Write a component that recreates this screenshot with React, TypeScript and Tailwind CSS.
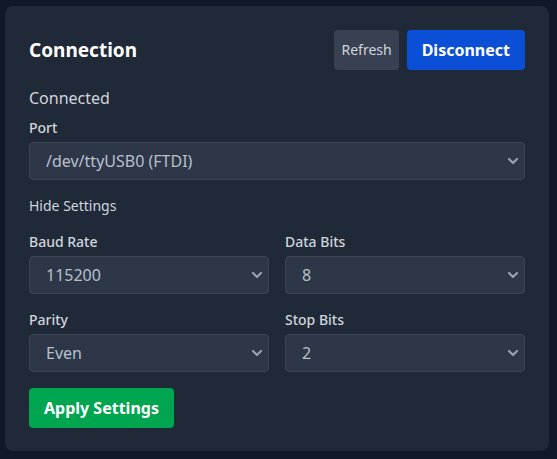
import { useState } from 'react'

function Chevron() {
  return (
    <svg className="pointer-events-none absolute right-[6px] top-1/2 -translate-y-1/2 w-[12px] h-[8px] text-gray-400" viewBox="0 0 12 8" fill="none">
      <path d="M2 2l4 4 4-4" stroke="currentColor" strokeWidth="2.2" strokeLinecap="round" strokeLinejoin="round" />
    </svg>
  )
}

function Select({ value, options, onChange }: { value: string; options: string[]; onChange: (v: string) => void }) {
  return (
    <div className="relative">
      <select
        value={value}
        onChange={(e) => onChange(e.target.value)}
        className="w-full h-[38px] appearance-none rounded-[4px] border border-[#3b4554] bg-[#2d3748] pl-4 pr-8 text-base text-[#b8c0cb] outline-none"
      >
        {options.map((o) => <option key={o} value={o}>{o}</option>)}
      </select>
      <Chevron />
    </div>
  )
}

export default function App() {
  const [port, setPort] = useState('/dev/ttyUSB0 (FTDI)')
  const [baud, setBaud] = useState('115200')
  const [dataBits, setDataBits] = useState('8')
  const [parity, setParity] = useState('Even')
  const [stopBits, setStopBits] = useState('2')

  return (
    <div className="min-h-[459px] bg-[#111827] pt-[6px] pl-[5px] font-['Noto_Sans','Open_Sans',sans-serif]">
      <div className="w-[544px] h-[445px] rounded-lg bg-[#1f2937] p-6">
        <div className="flex items-center justify-between mb-4">
          <h2 className="text-[19px] font-bold text-white">Connection</h2>
          <div className="flex gap-2">
            <button className="h-10 px-[7px] rounded-[4px] bg-[#374151] text-sm text-gray-300">Refresh</button>
            <button className="h-10 px-[15px] rounded-[4px] bg-[#0b4fd7] text-base font-bold text-white">Disconnect</button>
          </div>
        </div>

        <p className="text-base text-gray-300">Connected</p>

        <label className="block mt-2 mb-1 text-sm font-medium text-gray-300">Port</label>
        <Select value={port} options={['/dev/ttyUSB0 (FTDI)', '/dev/ttyUSB1', '/dev/ttyACM0']} onChange={setPort} />

        <button className="block mt-4 text-sm text-gray-300">Hide Settings</button>

        <div className="grid grid-cols-2 gap-x-4 gap-y-4 mt-4">
          <div>
            <label className="block mb-1 text-sm font-medium text-gray-300">Baud Rate</label>
            <Select value={baud} options={['9600', '19200', '38400', '57600', '115200']} onChange={setBaud} />
          </div>
          <div>
            <label className="block mb-1 text-sm font-medium text-gray-300">Data Bits</label>
            <Select value={dataBits} options={['5', '6', '7', '8']} onChange={setDataBits} />
          </div>
          <div>
            <label className="block mb-1 text-sm font-medium text-gray-300">Parity</label>
            <Select value={parity} options={['None', 'Even', 'Odd']} onChange={setParity} />
          </div>
          <div>
            <label className="block mb-1 text-sm font-medium text-gray-300">Stop Bits</label>
            <Select value={stopBits} options={['1', '2']} onChange={setStopBits} />
          </div>
        </div>

        <button className="mt-4 h-10 px-[15px] rounded-[4px] bg-[#00a54f] text-base font-bold text-white">Apply Settings</button>
      </div>
    </div>
  )
}
